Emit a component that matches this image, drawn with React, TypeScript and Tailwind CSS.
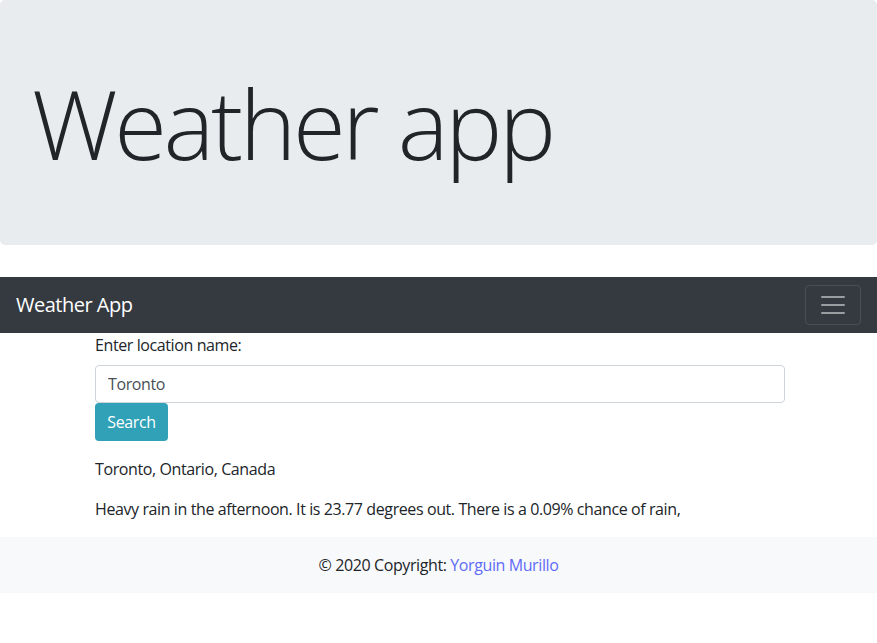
export default function App() {
  return (
    <div className="min-h-[643px] bg-white font-['Open_Sans',sans-serif] text-[16px] leading-6 tracking-[-0.4px] text-[#212529]">
      {/* jumbotron */}
      <div className="mb-8 rounded-[0.3rem] bg-[#e9ecef] px-8 py-16">
        <h1 className="text-[96px] font-light leading-[117px] tracking-[-3.4px]">Weather app</h1>
      </div>

      {/* navbar */}
      <nav className="flex h-14 items-center justify-between bg-[#343a40] px-4 py-2">
        <span className="text-[20px] leading-[30px] tracking-[-0.5px] text-white">Weather App</span>
        <button className="flex h-10 w-14 items-center justify-center rounded border border-white/10">
          <svg width="30" height="30" viewBox="0 0 30 30">
            <path
              d="M4 7h22M4 15h22M4 23h22"
              stroke="rgba(255,255,255,0.5)"
              strokeWidth="2"
              strokeLinecap="round"
            />
          </svg>
        </button>
      </nav>

      {/* form */}
      <div className="ml-[80px] w-[720px] px-[15px]">
        <label className="mb-2 block">Enter location name:</label>
        <input
          type="text"
          defaultValue="Toronto"
          className="block h-[38px] w-full rounded border border-[#ced4da] bg-white px-3 tracking-[-0.4px] text-[#495057] outline-none"
        />
        <button className="h-[38px] w-[73px] rounded bg-[#31a1b7] text-white">Search</button>
        <p className="mt-4 mb-4">Toronto, Ontario, Canada</p>
        <p className="mb-4">
          Heavy rain in the afternoon. It is 23.77 degrees out. There is a 0.09% chance of rain,
        </p>
      </div>

      {/* footer */}
      <footer className="bg-[#f8f9fa] py-4 text-center">
        © 2020 Copyright: <a className="text-[#5f6cf8]">Yorguin Murillo</a>
      </footer>
    </div>
  );
}
